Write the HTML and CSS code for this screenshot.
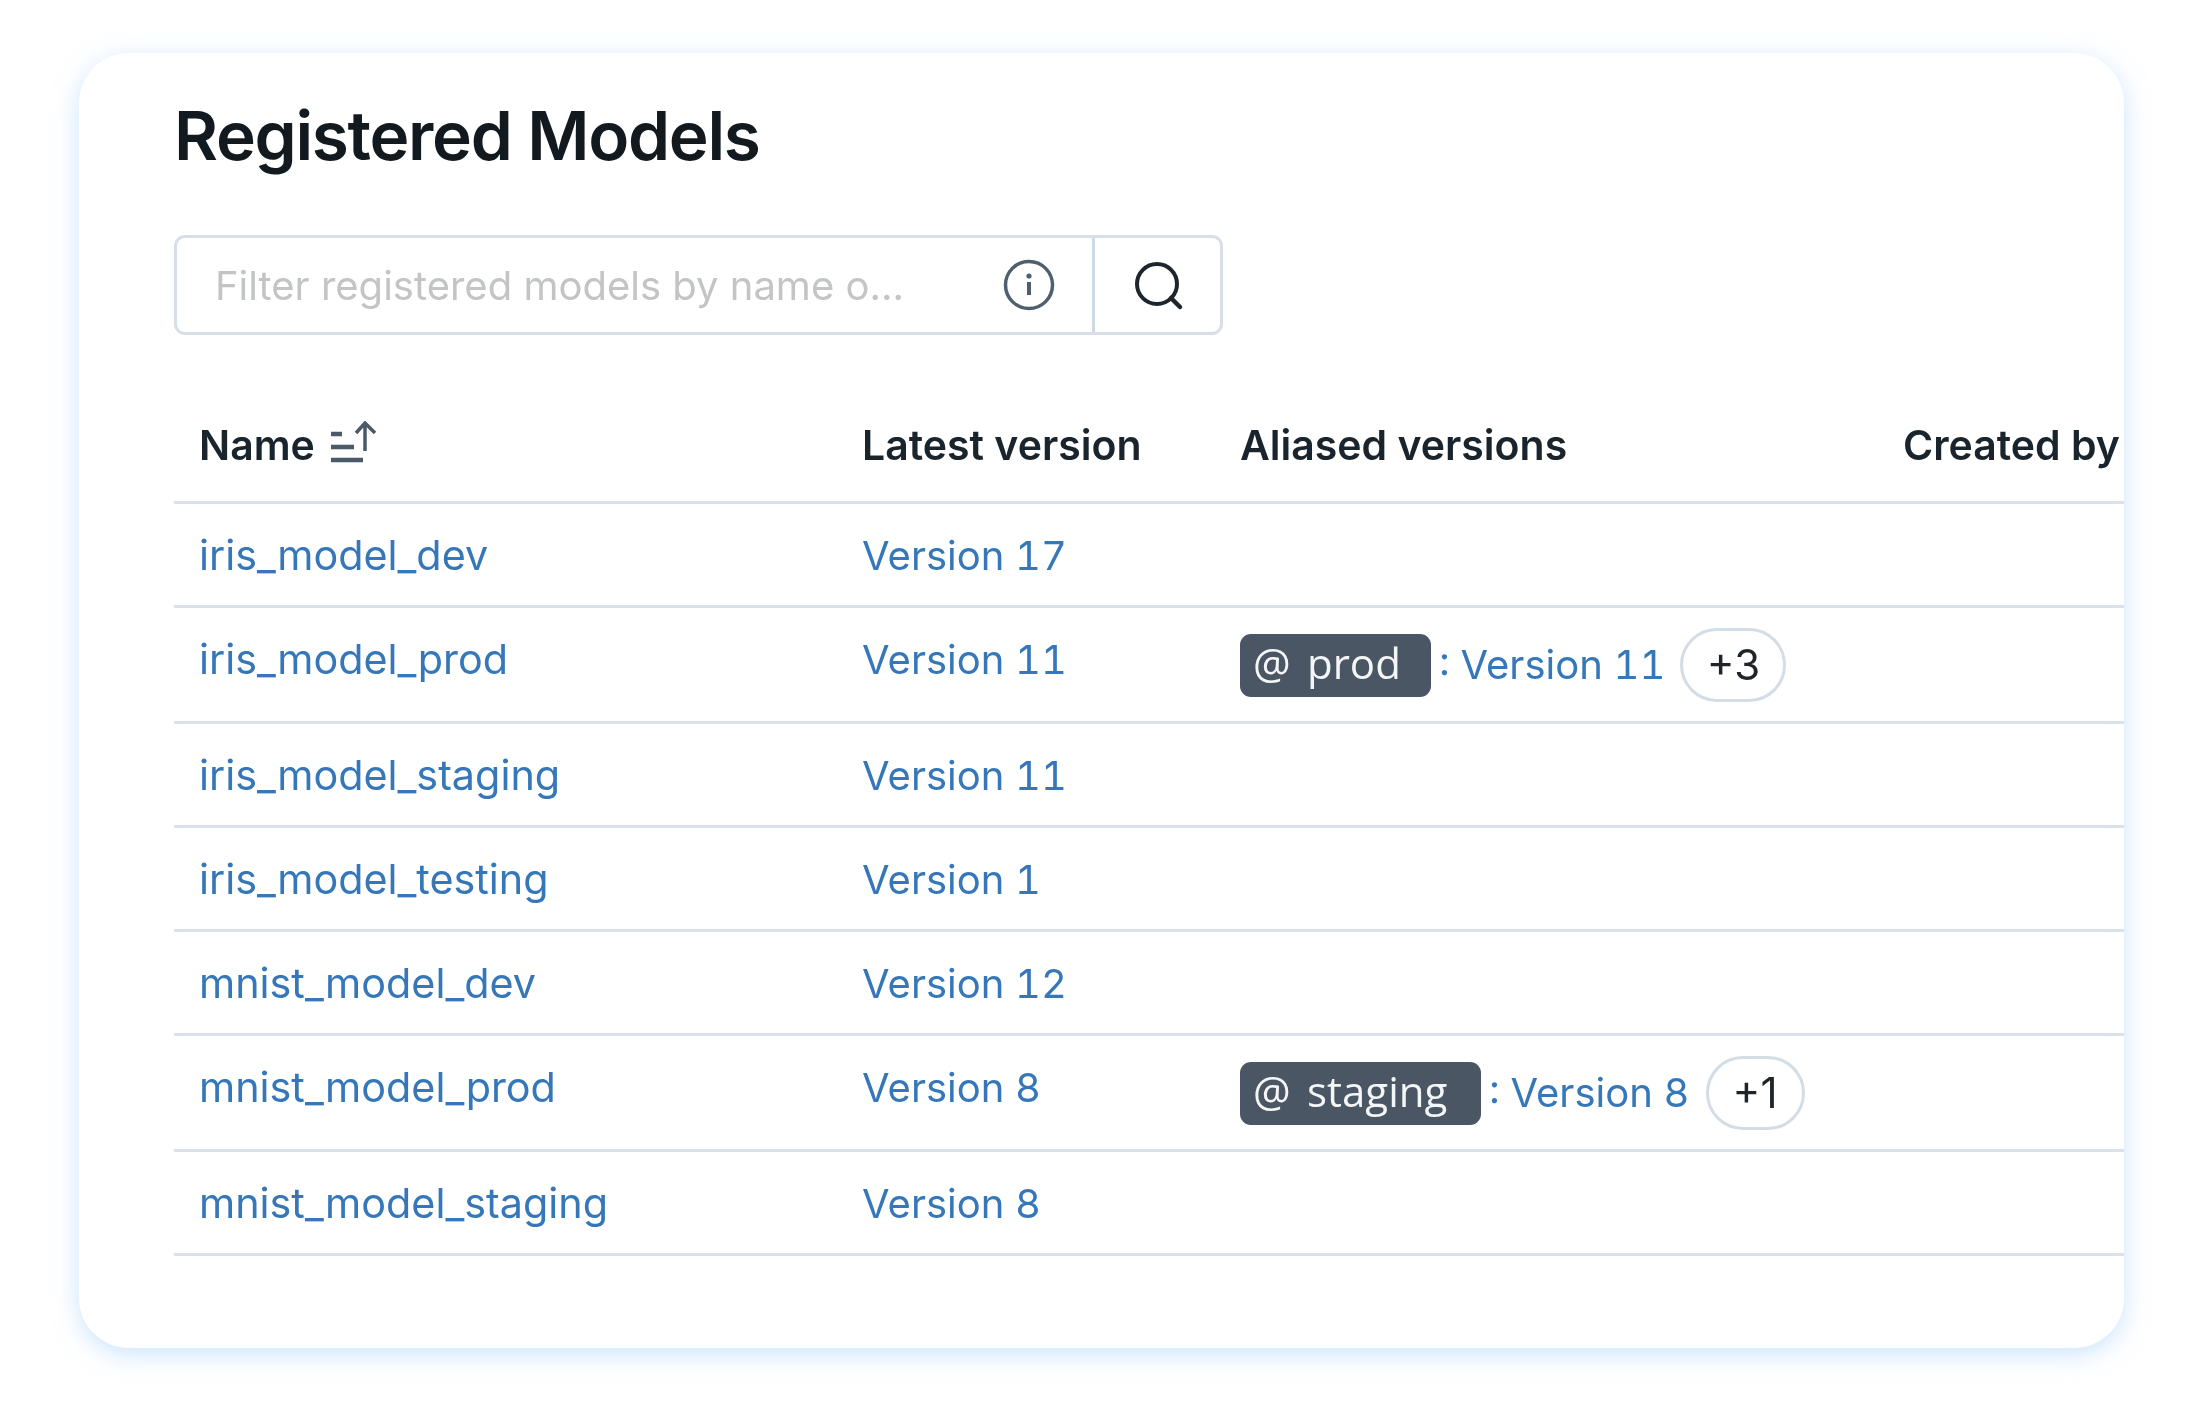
FILE: index.html
```html
<!DOCTYPE html>
<html lang="en">
    <head>
        <meta charset="utf-8">
        <link rel="stylesheet" href="styles.css">
        <title>Registered Models</title>
    </head>
    <body>
        <div class="card">
            <h1 class="title">Registered Models</h1>
            <div class="search">
                <div class="search-input">
                    <span class="placeholder">Filter registered models by name o...</span>
                    <svg class="info-icon" width="52" height="52" viewBox="0 0 52 52" fill="none">
                        <circle cx="26" cy="26" r="23.5" stroke="#4f5f6e" stroke-width="3.5"/>
                        <rect x="24" y="23" width="4" height="13" fill="#4f5f6e"/>
                        <circle cx="26" cy="17" r="2.6" fill="#4f5f6e"/>
                    </svg>
                </div>
                <div class="search-button">
                    <svg width="52" height="52" viewBox="0 0 52 52" fill="none">
                        <circle cx="25" cy="25" r="20" stroke="#1d262d" stroke-width="4"/>
                        <path d="M39 39 L48 48" stroke="#1d262d" stroke-width="4.5" stroke-linecap="round"/>
                    </svg>
                </div>
            </div>
            <table class="models">
                <thead>
                    <tr>
                        <th class="col-name">
                            <span class="name-head">Name
                                <svg class="sort-icon" width="48" height="44" viewBox="0 0 48 44" fill="none">
                                    <path d="M1 13 H12 M1 26 H24 M1 39 H33" stroke="#4a5a69" stroke-width="4.5"/>
                                    <path d="M35 30 V2 M26 12 L35 2 L45 12" stroke="#4a5a69" stroke-width="3.5"/>
                                </svg>
                            </span>
                        </th>
                        <th class="col-latest">Latest version</th>
                        <th class="col-alias">Aliased versions</th>
                        <th class="col-by">Created by</th>
                    </tr>
                </thead>
                <tbody>
                    <tr>
                        <td><a href="#">iris_model_dev</a></td>
                        <td><a href="#" class="version">Version 17</a></td>
                        <td></td>
                        <td></td>
                    </tr>
                    <tr class="tall">
                        <td><a href="#">iris_model_prod</a></td>
                        <td><a href="#" class="version">Version 11</a></td>
                        <td class="alias-cell">
                            <div class="alias">
                                <span class="alias-tag tag-prod"><span class="at">@</span>prod</span>
                                <a href="#" class="version alias-link">: Version 11</a>
                                <span class="more more-3">+3</span>
                            </div>
                        </td>
                        <td></td>
                    </tr>
                    <tr>
                        <td><a href="#">iris_model_staging</a></td>
                        <td><a href="#" class="version">Version 11</a></td>
                        <td></td>
                        <td></td>
                    </tr>
                    <tr>
                        <td><a href="#">iris_model_testing</a></td>
                        <td><a href="#" class="version">Version 1</a></td>
                        <td></td>
                        <td></td>
                    </tr>
                    <tr>
                        <td><a href="#">mnist_model_dev</a></td>
                        <td><a href="#" class="version">Version 12</a></td>
                        <td></td>
                        <td></td>
                    </tr>
                    <tr class="tall">
                        <td><a href="#">mnist_model_prod</a></td>
                        <td><a href="#" class="version">Version 8</a></td>
                        <td class="alias-cell">
                            <div class="alias">
                                <span class="alias-tag tag-staging"><span class="at">@</span>staging</span>
                                <a href="#" class="version alias-link">: Version 8</a>
                                <span class="more more-1">+1</span>
                            </div>
                        </td>
                        <td></td>
                    </tr>
                    <tr>
                        <td><a href="#">mnist_model_staging</a></td>
                        <td><a href="#" class="version">Version 8</a></td>
                        <td></td>
                        <td></td>
                    </tr>
                </tbody>
            </table>
        </div>
    </body>
</html>
```

FILE: styles.css
```css
html, body {
    margin: 0;
    padding: 0;
    background-color: #fff;
}

body {
    padding: 53px 77px 55px 79px;
    font-family: "Inter", "Liberation Sans", sans-serif;
    color: #1a242c;
}

.card {
    height: 1295px;
    box-sizing: border-box;
    padding: 42px 0 0 95px;
    background-color: #fff;
    border-radius: 50px;
    box-shadow: 0 6px 24px rgba(170, 210, 248, 0.6);
    overflow: hidden;
    filter: blur(0.6px);
}

.title {
    margin: 0;
    font-size: 67.5px;
    line-height: 82px;
    font-weight: 600;
    letter-spacing: -1.3px;
    color: #12191f;
}

.search {
    display: flex;
    width: 1049px;
    height: 100px;
    margin-top: 58px;
    box-sizing: border-box;
    border: 3px solid #d8dfe7;
    border-radius: 11px;
}

.search-input {
    flex: 1;
    display: flex;
    align-items: center;
    justify-content: space-between;
    padding: 0 37px 0 38px;
    border-right: 3px solid #cfd9e3;
}

.placeholder {
    font-size: 40px;
    color: #c3c4c6;
}

.search-button {
    width: 125px;
    display: flex;
    align-items: center;
    justify-content: center;
}

.models {
    width: 1950px;
    margin-top: 51px;
    table-layout: fixed;
    border-collapse: separate;
    border-spacing: 0;
}

.models th {
    height: 118px;
    padding: 3px 0 0 25px;
    box-sizing: border-box;
    text-align: left;
    vertical-align: middle;
    font-size: 41px;
    font-weight: 600;
    white-space: nowrap;
    border-bottom: 3px solid #dbe1e8;
}

.col-name { width: 663px; }
.col-latest { width: 378px; }
.col-alias { width: 663px; }

.name-head {
    display: inline-flex;
    align-items: flex-end;
    gap: 15px;
}

.sort-icon {
    margin-bottom: 5px;
}

.models td {
    height: 104px;
    box-sizing: border-box;
    padding: 27px 0 0 25px;
    vertical-align: top;
    font-size: 41.3px;
    line-height: 48px;
    white-space: nowrap;
    border-bottom: 3px solid #dbe1e8;
}

.models tr.tall td {
    height: 116px;
}

.models td.alias-cell {
    padding-left: 25px;
    padding-top: 20px;
}

.models a {
    color: #3577b8;
    text-decoration: none;
}

.models a.version {
    font-size: 40px;
    font-feature-settings: "tnum";
}

.alias {
    display: flex;
    align-items: center;
    height: 74px;
}

.alias-tag {
    display: inline-flex;
    align-items: center;
    height: 63px;
    box-sizing: border-box;
    padding: 0 0 4px 13px;
    border-radius: 11px;
    background-color: #4a5663;
    color: #f4f5f6;
    font-family: "Open Sans", sans-serif;
    font-size: 42px;
}

.at {
    width: 54px;
}

.tag-prod { width: 191px; }
.tag-staging { width: 241px; }

.models a.alias-link {
    margin-left: 8px;
}

.more {
    display: flex;
    align-items: center;
    justify-content: center;
    height: 74px;
    box-sizing: border-box;
    border: 3px solid #d3dde5;
    border-radius: 37px;
    color: #1f2429;
    font-size: 42px;
}

.more-3 {
    width: 106px;
    margin-left: 15px;
}

.more-1 {
    width: 99px;
    margin-left: 16px;
}
```
